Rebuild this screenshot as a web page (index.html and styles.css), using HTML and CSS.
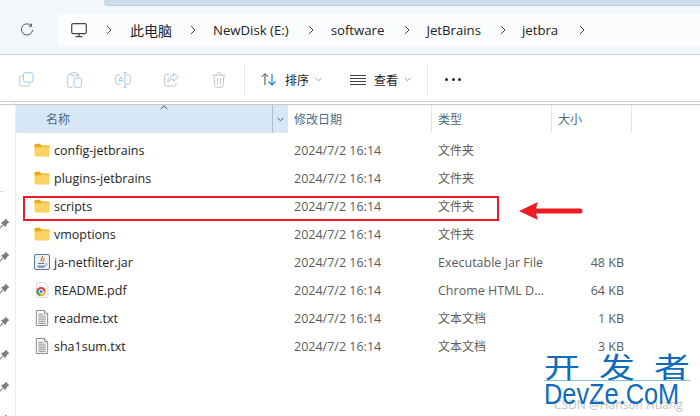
FILE: index.html
```html
<!DOCTYPE html>
<html lang="zh">
<head>
<meta charset="utf-8">
<title>jetbra</title>
<link rel="stylesheet" href="styles.css">
</head>
<body>
<svg class="defs" width="0" height="0" aria-hidden="true">
  <defs>
    <symbol id="folder" viewBox="0 0 16 14">
      <path d="M0.5 2.2C0.5 1.3 1.1 .7 2 .7H5.6L7.4 2.4H14.2C15 2.4 15.6 3 15.6 3.8V5H.5Z" fill="#e9a919"/>
      <path d="M.5 4.2H6.8L8 3.4H14.2C15 3.4 15.6 4 15.6 4.8V12.2C15.6 13 15 13.6 14.2 13.6H1.9C1.1 13.6 .5 13 .5 12.2Z" fill="#fcd262"/>
    </symbol>
    <symbol id="txt" viewBox="0 0 14 17">
      <path d="M1 .5H9.5L13 4V16.5H1Z" fill="#fff" stroke="#858585"/>
      <path d="M9.5 .5V4H13" fill="#eee" stroke="#858585"/>
      <path d="M3 4.5H8M3 6.5H11M3 8.5H11M3 10.5H11M3 12.5H11M3 14.5H11" stroke="#8a8a8a" fill="none"/>
    </symbol>
    <symbol id="pin" viewBox="0 0 10 10"><path d="M6 .5L9.5 4L8 4.6L6.2 7.6L5.6 8.2L1.8 4.4L2.4 3.8L5.4 2Z" fill="#7d7d7d"/><path d="M3.4 6.6L.5 9.5" stroke="#7d7d7d"/></symbol>
  </defs>
</svg>
<div class="window">
  <header class="topbar">
    <div class="tabstrip"><div class="tab"></div></div>
    <div class="navrow">
      <div class="refresh">
        <svg width="14" height="14" viewBox="0 0 14 14" fill="none" stroke="#555"><path d="M11.3 2.8A5.6 5.6 0 1 0 12.6 7"/><path d="M11.5 .6V3.2H8.9"/></svg>
      </div>
      <nav class="address">
        <svg class="pc" width="16" height="15" viewBox="0 0 16 15" fill="none" stroke="#444"><rect x=".7" y=".7" width="14.6" height="10" rx="1.6" stroke-width="1.2"/><path d="M8 10.7V13.4M4.5 13.6H11.5" stroke-width="1.2"/></svg>
        <span class="crumb-sep"><svg class="chev" width="6" height="10" viewBox="0 0 6 10"><path d="M1 1L5 5L1 9"/></svg></span><span class="crumb c1">此电脑</span>
        <span class="crumb-sep"><svg class="chev" width="6" height="10" viewBox="0 0 6 10"><path d="M1 1L5 5L1 9"/></svg></span><span class="crumb c2">NewDisk (E:)</span>
        <span class="crumb-sep"><svg class="chev" width="6" height="10" viewBox="0 0 6 10"><path d="M1 1L5 5L1 9"/></svg></span><span class="crumb c3">software</span>
        <span class="crumb-sep"><svg class="chev" width="6" height="10" viewBox="0 0 6 10"><path d="M1 1L5 5L1 9"/></svg></span><span class="crumb c4">JetBrains</span>
        <span class="crumb-sep"><svg class="chev" width="6" height="10" viewBox="0 0 6 10"><path d="M1 1L5 5L1 9"/></svg></span><span class="crumb c5">jetbra</span>
        <span class="crumb-sep"><svg class="chev" width="6" height="10" viewBox="0 0 6 10"><path d="M1 1L5 5L1 9"/></svg></span>
      </nav>
    </div>
  </header>
  <div class="toolbar">
    <div class="tools">
      <svg width="15" height="15" viewBox="0 0 15 15" fill="none"><rect x="4.5" y=".7" width="9.5" height="9.5" rx="2" stroke="#9ccbee"/><path d="M3.5 4H2.5A1.6 1.6 0 0 0 .7 5.6V12.4A1.6 1.6 0 0 0 2.5 14H9A1.6 1.6 0 0 0 10.6 12.4V11.4" stroke="#c4c4c4"/></svg>
      <svg width="15" height="16" viewBox="0 0 15 16" fill="none"><path d="M4 2.5H2A1.3 1.3 0 0 0 .7 3.8V14A1.3 1.3 0 0 0 2 15.3H5.5M10 2.5H11.5V5" stroke="#c4c4c4"/><rect x="4" y=".7" width="6" height="3" rx="1" stroke="#c4c4c4"/><rect x="7" y="6" width="7.4" height="9.3" rx="1.5" stroke="#9ccbee"/></svg>
      <svg width="16" height="16" viewBox="0 0 16 16" fill="none"><path d="M5 3H2A1.4 1.4 0 0 0 .7 4.4V10.6A1.4 1.4 0 0 0 2 12H5M11 3H14A1.4 1.4 0 0 1 15.3 4.4V10.6A1.4 1.4 0 0 1 14 12H11" stroke="#c4c4c4"/><path d="M3.5 10L5.5 5H6L8 10M4.2 8.5H7.3" stroke="#9ccbee"/><path d="M10 .7V15.3M8.5 .7H11.5M8.5 15.3H11.5" stroke="#9ccbee"/></svg>
      <svg width="15" height="15" viewBox="0 0 15 15" fill="none"><path d="M5 2.5H2.2A1.5 1.5 0 0 0 .7 4V12.5A1.5 1.5 0 0 0 2.2 14H10.5A1.5 1.5 0 0 0 12 12.5V10.5" stroke="#c4c4c4"/><path d="M9.5 1L14.3 5.2L9.5 9.4V7C7 7 5 8 3.8 10C3.8 6.5 6 3.8 9.5 3.5Z" stroke="#9ccbee"/></svg>
      <svg width="14" height="16" viewBox="0 0 14 16" fill="none" stroke="#c4c4c4"><path d="M.5 3.2H13.5M5 3V1.8A1.1 1.1 0 0 1 6.1 .7H7.9A1.1 1.1 0 0 1 9 1.8V3M2 3.2L2.8 13.5A1.8 1.8 0 0 0 4.6 15.2H9.4A1.8 1.8 0 0 0 11.2 13.5L12 3.2M5.5 6V12.5M8.5 6V12.5"/></svg>
    </div>
    <div class="divider"></div>
    <div class="cmd sort">
      <svg width="16" height="13" viewBox="0 0 16 13" fill="none"><path d="M4 12V1M.7 4L4 .7L7.3 4" stroke="#444"/><path d="M11 1V12M7.5 8.5L11 12L14.5 8.5" stroke="#1a86d8" stroke-width="1.2"/></svg>
      <span class="cmd-label">排序</span>
      <svg class="caret" width="7" height="5" viewBox="0 0 7 5"><path d="M.7 1L3.5 3.8L6.3 1"/></svg>
    </div>
    <div class="cmd view">
      <svg width="16" height="10" viewBox="0 0 16 10" fill="none" stroke="#444"><path d="M0 .5H16M0 3.5H16M0 6.5H16M0 9.5H16"/></svg>
      <span class="cmd-label">查看</span>
      <svg class="caret" width="7" height="5" viewBox="0 0 7 5"><path d="M.7 1L3.5 3.8L6.3 1"/></svg>
    </div>
    <div class="divider"></div>
    <div class="more"><i></i><i></i><i></i></div>
  </div>
  <div class="content">
    <aside class="navpane">
      <div class="nav-sep"></div>
      <svg class="pin"><use href="#pin"/></svg>
      <svg class="pin"><use href="#pin"/></svg>
      <svg class="pin"><use href="#pin"/></svg>
      <svg class="pin"><use href="#pin"/></svg>
      <svg class="pin"><use href="#pin"/></svg>
      <svg class="pin"><use href="#pin"/></svg>
      <svg class="pin"><use href="#pin"/></svg>
    </aside>
    <main class="list">
      <div class="head">
        <div class="h-name"><span>名称</span><svg class="sort-up" width="8" height="5" viewBox="0 0 8 5"><path d="M.7 4L4 .8L7.3 4"/></svg><b class="h-drop"><svg width="7" height="5" viewBox="0 0 7 5"><path d="M.7 1L3.5 3.8L6.3 1"/></svg></b></div>
        <div class="h-date">修改日期</div>
        <div class="h-type">类型</div>
        <div class="h-size">大小</div>
      </div>
      <div class="row"><span class="name"><svg class="ico"><use href="#folder"/></svg>config-jetbrains</span><span>2024/7/2 16:14</span><span class="cjk">文件夹</span><span></span></div>
      <div class="row"><span class="name"><svg class="ico"><use href="#folder"/></svg>plugins-jetbrains</span><span>2024/7/2 16:14</span><span class="cjk">文件夹</span><span></span></div>
      <div class="row"><span class="name"><svg class="ico"><use href="#folder"/></svg>scripts</span><span>2024/7/2 16:14</span><span class="cjk">文件夹</span><span></span></div>
      <div class="row"><span class="name"><svg class="ico"><use href="#folder"/></svg>vmoptions</span><span>2024/7/2 16:14</span><span class="cjk">文件夹</span><span></span></div>
      <div class="row"><span class="name"><svg class="ico" viewBox="0 0 16 16"><rect x=".5" y=".5" width="15" height="15" rx="1.5" fill="#eef1f6" stroke="#5d7696"/><path d="M3 11.5H11.5C11.5 13 10 13.8 7.2 13.8C4.5 13.8 3 13 3 11.5Z" fill="#6f8fb8"/><path d="M11 11.5C13 11.5 13.5 9.5 11.5 9.2" fill="none" stroke="#6f8fb8"/><path d="M8.5 2C9.5 4 6 5 7.2 7.2M10 4.5C10.5 6 8.5 6.3 9 8" fill="none" stroke="#d2691e" stroke-width="1.2"/><path d="M4 9.5H10" stroke="#5d7696"/></svg>ja-netfilter.jar</span><span>2024/7/2 16:14</span><span>Executable Jar File</span><span>48 KB</span></div>
      <div class="row"><span class="name"><svg class="ico" viewBox="0 0 16 16"><path d="M2.5 .5H10.5L14 4V15.5H2.5Z" fill="#f7f7f7" stroke="#dcdcdc"/><circle cx="7" cy="9.5" r="4.5" fill="#e33b2e"/><path d="M7 9.5L11.5 9.5A4.5 4.5 0 0 1 6 13.9Z" fill="#fbc02d"/><path d="M7 9.5L6 13.9A4.5 4.5 0 0 1 2.9 7.6Z" fill="#2fa84f"/><circle cx="7" cy="9.5" r="2.1" fill="#3c8af0" stroke="#fff" stroke-width=".9"/></svg>README.pdf</span><span>2024/7/2 16:14</span><span>Chrome HTML D...</span><span>64 KB</span></div>
      <div class="row"><span class="name"><svg class="ico txt"><use href="#txt"/></svg>readme.txt</span><span>2024/7/2 16:14</span><span class="cjk">文本文档</span><span>1 KB</span></div>
      <div class="row"><span class="name"><svg class="ico txt"><use href="#txt"/></svg>sha1sum.txt</span><span>2024/7/2 16:14</span><span class="cjk">文本文档</span><span>3 KB</span></div>
    </main>
  </div>
  <div class="highlight"></div>
  <svg class="arrow" width="66" height="24" viewBox="0 0 66 24"><path d="M1 12L20 3L18 9.5H62A2.4 2.4 0 0 1 62 14.5H18L20 21Z" fill="#ed1c24"/></svg>
  <div class="stamp">CSDN @Hanson Huang</div>
  <div class="logo">
    <div class="logo-cn"><span>开</span><span>发</span><span>者</span></div>
    <div class="logo-en">DevZe.CoM</div>
  </div>
</div>
</body>
</html>
```

FILE: styles.css
```css
* { box-sizing: border-box; }
html, body { margin: 0; padding: 0; }
body { width: 700px; height: 416px; overflow: hidden; background: #fff; font-family: "Open Sans", "Noto Sans CJK SC", sans-serif; }
.defs { position: absolute; }
.window { position: relative; width: 700px; height: 416px; overflow: hidden; }

.topbar { height: 55px; background: #f3f6fa; border-bottom: 1px solid #c6d0d9; }
.tabstrip { height: 14px; padding-left: 104px; }
.tab { height: 6px; background: #ccdcea; border-bottom: 1px solid #bdcddc; border-bottom-left-radius: 4px; }
.navrow { display: flex; align-items: center; height: 32px; }
.refresh { width: 57px; padding-left: 20px; display: flex; }
.address { flex: 1; height: 32px; background: #fbfcfe; border-radius: 4px 0 0 4px; display: flex; align-items: center; padding-left: 14px; font-size: 13.2px; color: #222; white-space: nowrap; }
.crumb-sep { display: flex; width: 6px; }
.chev { fill: none; stroke: #444; stroke-width: 1; }
.crumb-sep:nth-of-type(1) { margin-left: 19px; }
.c1 { margin: 0 18px; font-size: 14px; }
.c2 { margin: 0 19px 0 17px; }
.c3 { margin: 0 20px 0 17px; }
.c4 { margin: 0 19px 0 16px; }
.c5 { margin: 0 21px 0 16px; }

.toolbar { height: 47px; display: flex; align-items: center; padding: 3px 0 0 19px; border-bottom: 1px solid #c9c9c9; color: #222; }
.tools { display: flex; align-items: center; gap: 33px; width: 225px; }
.divider { width: 1px; height: 32px; background: #e6e6e6; }
.cmd { display: flex; align-items: center; font-size: 12px; }
.sort { width: 105px; padding-left: 16px; }
.view { width: 77px; }
.cmd-label { margin-left: 8px; margin-right: 6px; }
.caret { fill: none; stroke: #999; }
.more { display: flex; gap: 3.5px; margin-left: 17px; }
.more i { width: 3px; height: 3px; border-radius: 50%; background: #222; }

.content { display: flex; height: 314px; }
.navpane { width: 16px; border-right: 1px solid #eee; display: flex; flex-direction: column; align-items: flex-start; gap: 21.7px; padding-top: 89px; flex-shrink: 0; overflow: hidden; }
.nav-sep { width: 4px; height: 1px; background: #dcdcdc; margin-bottom: 4.3px; flex-shrink: 0; }
.pin { width: 11px; height: 11px; display: block; flex-shrink: 0; margin-left: -1px; }
.list { flex: 1; }

.head { display: grid; grid-template-columns: 272px 144px 120px 80px; height: 29px; margin: 2px 0 3px -16px; padding-left: 16px; font-size: 12px; color: #4c6a85; align-items: stretch; border-top: 1px solid #c9c9c9; }
.head > div { display: flex; align-items: center; padding-left: 6px; border-right: 1px solid #e3e5e8; }
.h-name { position: relative; background: #d6e7f6; padding-left: 30px !important; border-radius: 0 0 2px 2px; border-right: 0 !important; }
.sort-up { position: absolute; left: 144px; top: 0; fill: none; stroke: #555; }
.h-drop { position: absolute; right: 0; top: 0; bottom: 0; width: 16px; border-left: 1px solid #a9bfd2; display: flex; align-items: center; justify-content: center; }
.h-drop svg { fill: none; stroke: #555; }

.row { display: grid; grid-template-columns: 278px 144px 120px 66px; height: 28px; align-items: center; font-size: 12.5px; color: #5c5c5c; }
.row span:last-child { text-align: right; }
.row > span:nth-child(3) { white-space: nowrap; }
.row .cjk { font-size: 12px; }
.name { display: flex; align-items: center; color: #1e1e1e; padding-left: 18px; }
.ico { width: 16px; height: 16px; margin-right: 4px; flex-shrink: 0; }

.highlight { position: absolute; left: 23px; top: 196px; width: 476px; height: 25px; border: 2px solid #ed1c24; }
.arrow { position: absolute; left: 518px; top: 199px; }
.stamp { position: absolute; left: 554px; top: 396px; font-size: 12px; color: #c2c2c2; white-space: nowrap; }
.logo { position: absolute; left: 544px; top: 351px; width: 146px; color: #0f6cbd; }
.logo-cn { display: flex; gap: 19px; font-family: "Noto Sans CJK SC", sans-serif; font-size: 36px; line-height: 36px; height: 30px; border-bottom: 1px solid #7fc0e6; }
.logo-cn span { display: block; transform: scaleY(.8); transform-origin: 50% 0; }
.logo-en { font-family: "Liberation Sans", sans-serif; font-size: 30px; line-height: 26px; white-space: nowrap; transform: scaleX(.845); transform-origin: 0 0; }
```
